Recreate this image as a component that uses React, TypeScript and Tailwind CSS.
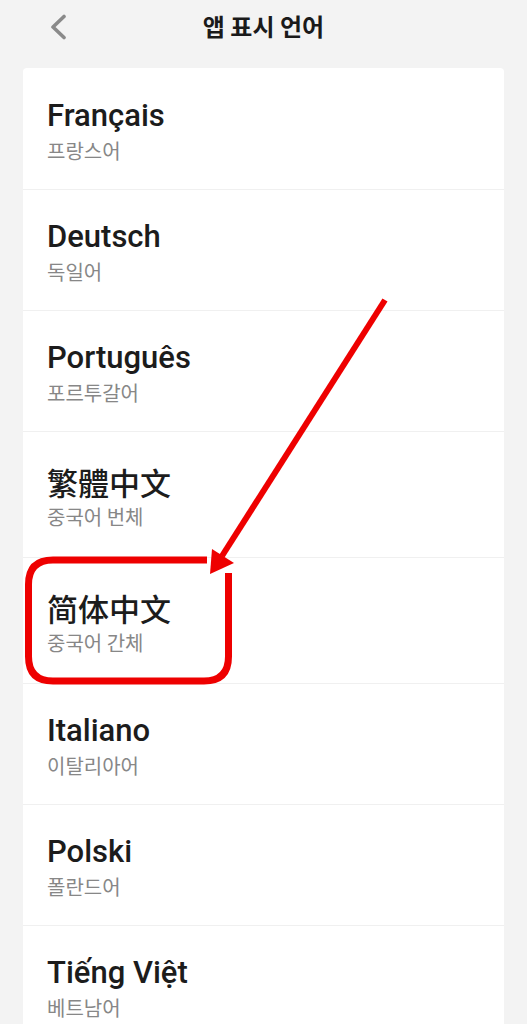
const languages = [
  { name: 'Français', label: '프랑스어' },
  { name: 'Deutsch', label: '독일어' },
  { name: 'Português', label: '포르투갈어' },
  { name: '繁體中文', label: '중국어 번체', cjk: 'tc' },
  { name: '简体中文', label: '중국어 간체', cjk: 'sc' },
  { name: 'Italiano', label: '이탈리아어' },
  { name: 'Polski', label: '폴란드어' },
  { name: 'Tiếng Việt', label: '베트남어' },
]

function Annotation() {
  return (
    <svg className="pointer-events-none absolute left-0 top-0" width="527" height="1024" viewBox="0 0 527 1024">
      {/* highlight box, top-right corner left open for the arrow */}
      <path
        d="M207 560 H53 Q28.5 560 28.5 584.5 V656.5 Q28.5 681 53 681 H204 Q228.5 681 228.5 656.5 V573"
        fill="none"
        stroke="#ee0000"
        strokeWidth="7"
      />
      <line x1="385" y1="300" x2="222" y2="556" stroke="#ee0000" strokeWidth="6" />
      <polygon points="210,574 212,549 234,563" fill="#ee0000" />
    </svg>
  )
}

export default function App() {
  return (
    <div
      className="relative min-h-[1024px] w-[527px] overflow-hidden bg-[#f3f3f3]"
      style={{ fontFamily: 'Roboto, "Noto Sans CJK KR", sans-serif' }}
    >
      <header className="relative flex h-[52px] items-center justify-center">
        <button className="absolute left-[48px] top-[14px] text-[#8a8a8a]">
          <svg width="20" height="26" viewBox="0 0 20 26" fill="none" stroke="currentColor" strokeWidth="3.6" strokeLinecap="round" strokeLinejoin="round">
            <polyline points="16,2.5 5,13 16,23.5" />
          </svg>
        </button>
        <h1 className="text-[24px] font-bold text-[#1a1a1a]" style={{ fontFamily: '"Noto Sans CJK KR", sans-serif' }}>
          앱 표시 언어
        </h1>
      </header>

      <div className="mx-[23px] mt-[16px] rounded-t-[4px] bg-white pt-px">
        {languages.map((lang) => (
          <div
            key={lang.name}
            className={`border-b border-[#f0f0f0] px-6 ${lang.cjk ? 'pt-[31.5px] pb-[27.5px]' : 'pt-[29px] pb-[25px]'}`}
          >
            <div
              className="text-[31px] font-medium leading-[36px] text-[#1c1c1c]"
              style={
                lang.cjk === 'sc'
                  ? { fontFamily: '"Noto Sans CJK SC", sans-serif' }
                  : lang.cjk === 'tc'
                    ? { fontFamily: '"Noto Sans CJK TC", sans-serif' }
                    : undefined
              }
            >
              {lang.name}
            </div>
            <div
              className="mt-[4px] text-[20px] leading-[26px] text-[#878787]"
              style={{ fontFamily: '"Noto Sans CJK KR", sans-serif' }}
            >
              {lang.label}
            </div>
          </div>
        ))}
      </div>

      <Annotation />
    </div>
  )
}
